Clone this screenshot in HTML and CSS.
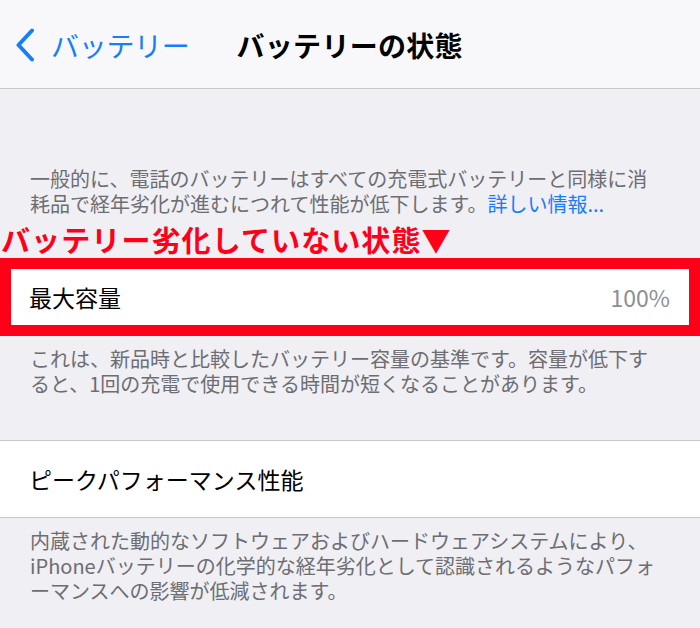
FILE: index.html
```html
<!DOCTYPE html>
<html lang="ja">

<head>
	<meta charset="UTF-8">
	<title>バッテリーの状態</title>
	<link rel="stylesheet" href="styles.css">
</head>

<body>
	<header class="nav-bar">
		<a class="back" href="#">
			<svg class="chevron" width="22" height="34" viewBox="0 0 22 34">
				<path d="M18 2.5 L4.5 17 L18 31.5" fill="none" stroke="#157efb" stroke-width="4" stroke-linecap="round" stroke-linejoin="round" />
			</svg>
			<span>バッテリー</span>
		</a>
		<h1 class="nav-title">バッテリーの状態</h1>
	</header>

	<main class="content">
		<p class="note note-intro">一般的に、電話のバッテリーはすべての充電式バッテリーと同様に消<br>耗品で経年劣化が進むにつれて性能が低下します。<a class="link" href="#">詳しい情報...</a></p>

		<p class="annotation">バッテリー劣化していない状態▼</p>

		<div class="group group-marked">
			<div class="cell">
				<span>最大容量</span>
				<span class="cell-value">100%</span>
			</div>
		</div>

		<p class="note">これは、新品時と比較したバッテリー容量の基準です。容量が低下す<br>ると、1回の充電で使用できる時間が短くなることがあります。</p>

		<div class="group group-spaced">
			<div class="cell">
				<span>ピークパフォーマンス性能</span>
			</div>
		</div>

		<p class="note">内蔵された動的なソフトウェアおよびハードウェアシステムにより、<br>iPhoneバッテリーの化学的な経年劣化として認識されるようなパフォ<br>ーマンスへの影響が低減されます。</p>
	</main>
</body>

</html>
```

FILE: styles.css
```css
body {
	margin: 0;
	padding: 0;
	background-color: #efeff4;
	font-family: "Noto Sans CJK JP", "Noto Sans", sans-serif;
	color: #000;
	height: 628px;
	overflow: hidden;
}

.nav-bar {
	height: 89px;
	background-color: #f8f8fa;
	border-bottom: 1px solid #c8c7cc;
	display: flex;
	align-items: center;
	padding-top: 2px;
	box-sizing: border-box;
}

.back {
	display: flex;
	align-items: center;
	color: #157efb;
	text-decoration: none;
	font-size: 28px;
	margin-left: 14px;
	letter-spacing: -0.3px;
}

.chevron {
	margin-right: 15px;
}

.nav-title {
	margin: 0 0 0 47px;
	font-size: 28px;
	font-weight: 700;
	letter-spacing: 0.3px;
}

.content {
	display: flex;
	flex-direction: column;
}

.note {
	margin: 0;
	padding: 10px 20px 0 30px;
	font-size: 20px;
	line-height: 25px;
	color: #6d6d72;
	white-space: nowrap;
}

.note-intro {
	padding-top: 77px;
}

.link {
	color: #157efb;
	text-decoration: none;
}

.annotation {
	margin: 5px 0 0 1px;
	line-height: 37px;
	font-size: 29px;
	font-weight: 700;
	color: #ff0019;
	letter-spacing: 1.1px;
}

.group {
	background-color: #fff;
	border-top: 1px solid #c8c7cc;
	border-bottom: 1px solid #c8c7cc;
}

.group-marked {
	outline: 11px solid #ff0019;
	outline-offset: -11px;
	border-top-color: #ff0019;
}

.group-spaced {
	margin-top: 44px;
}

.cell {
	height: 76px;
	display: flex;
	align-items: center;
	justify-content: space-between;
	padding: 0 30px 0 29px;
	font-size: 23px;
}

.cell-value {
	color: #8e8e93;
}
```
